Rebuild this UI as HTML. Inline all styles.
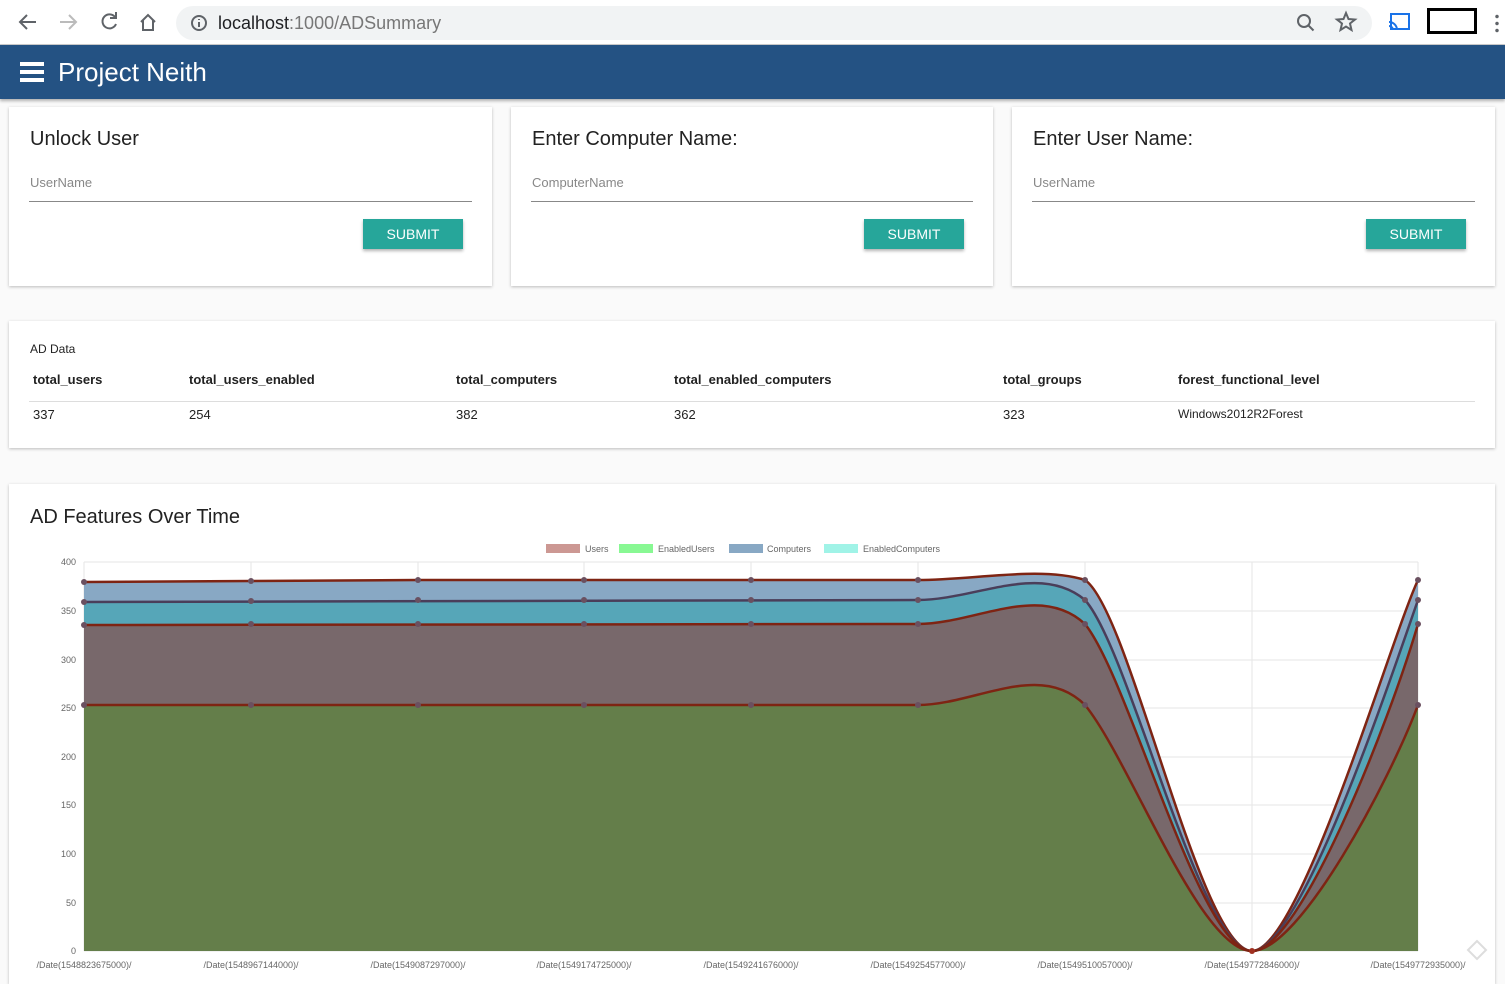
<!DOCTYPE html>
<html><head><meta charset="utf-8"><style>
*{box-sizing:border-box;margin:0;padding:0}
body{width:1505px;height:975px;overflow:hidden;background:#fafafa;font-family:"Liberation Sans",Arial,sans-serif;position:relative}
.chrome{position:absolute;left:0;top:0;width:1505px;height:45px;background:#fff;border-bottom:1px solid #ccc}
.url{position:absolute;left:176px;top:6px;width:1196px;height:34px;border-radius:17px;background:#f1f3f4}
.url span{position:absolute;left:42px;top:7px;font-size:18px;color:#202124}
.url span i{font-style:normal;color:#777}
.bar{position:absolute;left:0;top:45px;width:1505px;height:54px;background:#245283;box-shadow:0 2px 3px rgba(0,0,0,.3)}
.bar .t{position:absolute;left:58px;top:12px;color:#fff;font-size:26px}
.card{position:absolute;background:#fff;box-shadow:0 1px 3px rgba(0,0,0,.25)}
.card h2{position:absolute;left:21px;top:21px;font-size:20px;font-weight:normal;color:#222}
.card .ph{position:absolute;left:21px;top:68px;font-size:13px;color:#888}
.card .ln{position:absolute;left:20px;right:20px;top:94px;border-top:1px solid #888}
.btn{position:absolute;right:29px;top:112px;width:100px;height:30px;background:#26a69a;color:#fff;font-size:14px;text-align:center;line-height:30px;box-shadow:0 2px 3px rgba(0,0,0,.3)}
.td{position:absolute;font-size:13px;color:#222}
</style></head><body>
<div class="chrome">
<svg width="170" height="45" style="position:absolute;left:0;top:0" fill="none" stroke-width="2">
<path d="M36 22H20M27 15l-7 7 7 7" stroke="#5f6368"/>
<path d="M60 22h16M69 15l7 7-7 7" stroke="#bbb"/>
<path d="M115 17a7 7 0 1 0 1 7" stroke="#5f6368"/><path d="M116 12v6h-6" stroke="#5f6368"/>
<path d="M141 22l7-7 7 7M143 20v10h10V20" stroke="#5f6368"/>
</svg>
<div class="url"><svg width="20" height="20" style="position:absolute;left:13px;top:7px"><circle cx="10" cy="10" r="7" fill="none" stroke="#5f6368" stroke-width="2"/><path d="M10 9v5M10 6v1" stroke="#5f6368" stroke-width="2"/></svg><span>localhost<i>:1000/ADSummary</i></span></div>
<svg width="80" height="45" style="position:absolute;left:1290px;top:0" fill="none" stroke="#5f6368" stroke-width="2"><circle cx="14" cy="21" r="6"/><path d="M18.5 25.5l5 5"/><path d="M56 13l2.5 6 6.5.5-5 4 1.5 6.5-5.5-3.5-5.5 3.5 1.5-6.5-5-4 6.5-.5z"/></svg>
<svg width="24" height="20" style="position:absolute;left:1388px;top:12px" fill="none" stroke="#1a73e8" stroke-width="2"><rect x="3" y="2" width="18" height="15"/><path d="M1 10a8 8 0 0 1 8 8M1 14a4 4 0 0 1 4 4"/></svg>
<div style="position:absolute;left:1427px;top:8px;width:50px;height:26px;border:3px solid #000"></div>
<div style="position:absolute;left:1495px;top:13px;width:4px;height:20px;background:radial-gradient(circle,#5f6368 1.5px,transparent 2px) 0 0/4px 7px"></div>
</div>
<div class="bar"><svg width="24" height="20" style="position:absolute;left:20px;top:17px"><rect y="0" width="24" height="4" fill="#fff"/><rect y="8" width="24" height="4" fill="#fff"/><rect y="16" width="24" height="4" fill="#fff"/></svg><div class="t">Project Neith</div></div>

<div class="card" style="left:9px;top:107px;width:483px;height:179px"><h2>Unlock User</h2><div class="ph">UserName</div><div class="ln"></div><div class="btn">SUBMIT</div></div>
<div class="card" style="left:511px;top:107px;width:482px;height:179px"><h2>Enter Computer Name:</h2><div class="ph">ComputerName</div><div class="ln"></div><div class="btn">SUBMIT</div></div>
<div class="card" style="left:1012px;top:107px;width:483px;height:179px"><h2>Enter User Name:</h2><div class="ph">UserName</div><div class="ln"></div><div class="btn">SUBMIT</div></div>

<div class="card" style="left:9px;top:321px;width:1486px;height:127px">
<div class="td" style="left:21px;top:21px;font-size:12px">AD Data</div>
<div class="td" style="left:24px;top:51px;font-weight:bold">total_users</div>
<div class="td" style="left:180px;top:51px;font-weight:bold">total_users_enabled</div>
<div class="td" style="left:447px;top:51px;font-weight:bold">total_computers</div>
<div class="td" style="left:665px;top:51px;font-weight:bold">total_enabled_computers</div>
<div class="td" style="left:994px;top:51px;font-weight:bold">total_groups</div>
<div class="td" style="left:1169px;top:51px;font-weight:bold">forest_functional_level</div>
<div style="position:absolute;left:20px;right:20px;top:80px;border-top:1px solid #ddd"></div>
<div class="td" style="left:24px;top:86px">337</div>
<div class="td" style="left:180px;top:86px">254</div>
<div class="td" style="left:447px;top:86px">382</div>
<div class="td" style="left:665px;top:86px">362</div>
<div class="td" style="left:994px;top:86px">323</div>
<div class="td" style="left:1169px;top:86px;font-size:12px">Windows2012R2Forest</div>
</div>

<div class="card" style="left:9px;top:484px;width:1486px;height:500px"><h2 style="top:22px">AD Features Over Time</h2></div>

<svg width="1505" height="975" style="position:absolute;left:0;top:0" font-family="Liberation Sans,Arial,sans-serif">
<g font-size="9" fill="#666">
<rect x="546" y="544" width="34" height="9" fill="#cc9893"/><text x="585" y="552">Users</text>
<rect x="619" y="544" width="34" height="9" fill="#88f893"/><text x="658" y="552">EnabledUsers</text>
<rect x="729" y="544" width="34" height="9" fill="#88a8c4"/><text x="767" y="552">Computers</text>
<rect x="824" y="544" width="34" height="9" fill="#a0f3e7"/><text x="863" y="552">EnabledComputers</text>
</g>
<g stroke="#e6e6e6" stroke-width="1">
<path d="M84 562H1418M84 611H1418M84 660H1418M84 708H1418M84 757H1418M84 805H1418M84 854H1418M84 903H1418M84 951H1418"/>
<path d="M84 562V951M251 562V951M418 562V951M584 562V951M751 562V951M918 562V951M1085 562V951M1252 562V951M1418 562V951"/>
</g>
<g font-size="9" fill="#666" text-anchor="end">
<text x="76" y="565">400</text><text x="76" y="614">350</text><text x="76" y="663">300</text><text x="76" y="711">250</text><text x="76" y="760">200</text><text x="76" y="808">150</text><text x="76" y="857">100</text><text x="76" y="906">50</text><text x="76" y="954">0</text>
</g>
<g font-size="9" fill="#666" text-anchor="middle">
<text x="84" y="968">/Date(1548823675000)/</text><text x="251" y="968">/Date(1548967144000)/</text><text x="418" y="968">/Date(1549087297000)/</text><text x="584" y="968">/Date(1549174725000)/</text><text x="751" y="968">/Date(1549241676000)/</text><text x="918" y="968">/Date(1549254577000)/</text><text x="1085" y="968">/Date(1549510057000)/</text><text x="1252" y="968">/Date(1549772846000)/</text><text x="1418" y="968">/Date(1549772935000)/</text>
</g>
<path d="M84 582L251 581L418 580L918 580C975 580 1040 566 1085 580C1130 610 1200 951 1252 951C1300 951 1390 640 1418 580V951H84Z" fill="#88a8c4"/>
<path d="M84 602L918 600C975 600 1040 562 1085 600C1130 650 1200 951 1252 951C1300 951 1390 680 1418 600V951H84Z" fill="#56a6b8"/>
<path d="M84 625L918 624C975 624 1040 582 1085 624C1130 680 1200 951 1252 951C1300 951 1390 720 1418 624V951H84Z" fill="#78686b"/>
<path d="M84 705L918 705C975 705 1040 660 1085 705C1130 760 1200 951 1252 951C1300 951 1390 780 1418 705V951H84Z" fill="#647e4a"/>
<g fill="none" stroke-width="2.5">
<path d="M84 582L251 581L418 580L918 580C975 580 1040 566 1085 580C1130 610 1200 951 1252 951C1300 951 1390 640 1418 580" stroke="#7e2413"/>
<path d="M84 602L918 600C975 600 1040 562 1085 600C1130 650 1200 951 1252 951C1300 951 1390 680 1418 600" stroke="#4a3e5a"/>
<path d="M84 625L918 624C975 624 1040 582 1085 624C1130 680 1200 951 1252 951C1300 951 1390 720 1418 624" stroke="#7e2413"/>
<path d="M84 705L918 705C975 705 1040 660 1085 705C1130 760 1200 951 1252 951C1300 951 1390 780 1418 705" stroke="#7e2413"/>
</g>
<g fill="#6a5060">
<circle cx="84" cy="582" r="3"/><circle cx="251" cy="581" r="3"/><circle cx="418" cy="580" r="3"/><circle cx="584" cy="580" r="3"/><circle cx="751" cy="580" r="3"/><circle cx="918" cy="580" r="3"/><circle cx="1085" cy="580" r="3"/><circle cx="1418" cy="580" r="3"/>
<circle cx="84" cy="602" r="3"/><circle cx="251" cy="601" r="3"/><circle cx="418" cy="600" r="3"/><circle cx="584" cy="600" r="3"/><circle cx="751" cy="600" r="3"/><circle cx="918" cy="600" r="3"/><circle cx="1085" cy="600" r="3"/><circle cx="1418" cy="600" r="3"/>
<circle cx="84" cy="625" r="3"/><circle cx="251" cy="624" r="3"/><circle cx="418" cy="624" r="3"/><circle cx="584" cy="624" r="3"/><circle cx="751" cy="624" r="3"/><circle cx="918" cy="624" r="3"/><circle cx="1085" cy="624" r="3"/><circle cx="1418" cy="624" r="3"/>
<circle cx="84" cy="705" r="3"/><circle cx="251" cy="705" r="3"/><circle cx="418" cy="705" r="3"/><circle cx="584" cy="705" r="3"/><circle cx="751" cy="705" r="3"/><circle cx="918" cy="705" r="3"/><circle cx="1085" cy="705" r="3"/><circle cx="1418" cy="705" r="3"/>
<circle cx="1252" cy="951" r="3" fill="#a03020"/>
</g>
<path d="M1468 950l9-9 9 9-9 9z" fill="none" stroke="#ddd" stroke-width="2"/>
</svg>
</body></html>
